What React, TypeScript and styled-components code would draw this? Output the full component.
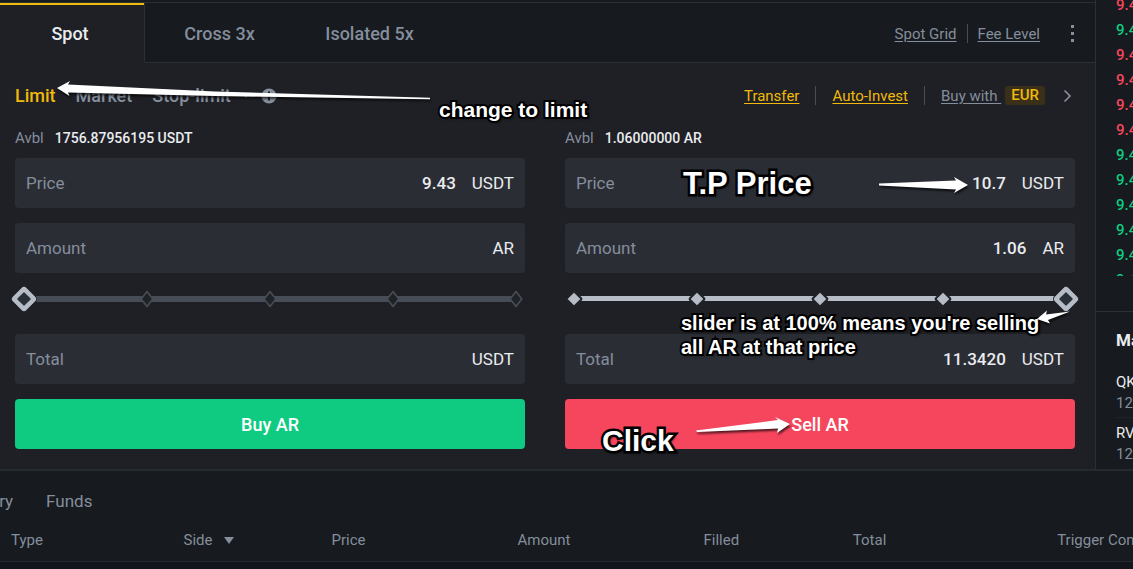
import React from 'react';
import styled, { createGlobalStyle } from 'styled-components';

const GlobalStyle = createGlobalStyle`
  * { box-sizing: border-box; }
  body { margin: 0; background: #12161c; font-family: Roboto, "Liberation Sans", sans-serif; color: #eaecef; overflow: hidden; }
  button, input { font-family: inherit; }
`;

const Top = styled.div`
  display: flex;
  border-bottom: 2px solid #252930;
`;
const Trade = styled.main`
  flex: 1;
  min-width: 0;
  background: #1f2025;
  border-right: 1px solid #2b2f36;
`;
const TabBar = styled.nav`
  display: flex;
  height: 63px;
  padding-top: 2px;
  background: #171a1e;
`;
const ModeTab = styled.button<{ $active?: boolean; $width: number }>`
  width: ${p => p.$width}px;
  padding: 2px 4px 0 0;
  border: 0;
  border-top: 1px solid #2b2f36;
  border-bottom: 1px solid ${p => (p.$active ? '#1f2025' : '#2b2f36')};
  border-right: ${p => (p.$active ? '1px solid #2b2f36' : '0')};
  box-shadow: ${p => (p.$active ? 'inset 0 2px #f0b90b' : 'none')};
  background: ${p => (p.$active ? '#1f2025' : 'transparent')};
  color: ${p => (p.$active ? '#eaecef' : '#848e9c')};
  font-size: 18px;
  font-weight: 500;
`;
const TabLinks = styled.div`
  flex: 1;
  display: flex;
  align-items: center;
  justify-content: flex-end;
  gap: 10px;
  padding: 2px 20px 0 0;
  border-top: 1px solid #2b2f36;
  border-bottom: 1px solid #2b2f36;
`;
const TextLink = styled.a<{ $accent?: boolean }>`
  color: ${p => (p.$accent ? '#f0b90b' : '#848e9c')};
  font-size: 15px;
  line-height: 20px;
  text-decoration: underline;
  text-underline-offset: 2px;
  white-space: pre;
`;
const Divider = styled.span`
  width: 1px;
  height: 19px;
  background: #474d57;
`;
const IconButton = styled.button`
  display: flex;
  padding: 0;
  border: 0;
  background: none;
  color: #848e9c;
`;
const MoreButton = styled(IconButton)`
  margin-left: 20px;
`;
const TypeBar = styled.div`
  display: flex;
  align-items: center;
  justify-content: space-between;
  height: 64px;
  padding: 1px 20px 0 15px;
`;
const TypeGroup = styled.div`
  display: flex;
  align-items: center;
  gap: 20px;
  padding-top: 1px;
`;
const TypeButton = styled.button<{ $active?: boolean }>`
  padding: 0;
  border: 0;
  background: none;
  color: ${p => (p.$active ? '#f0b90b' : '#848e9c')};
  font-size: 18px;
  font-weight: 500;
  line-height: 24px;
`;
const StopGroup = styled.div`
  display: flex;
  align-items: center;
  gap: 10px;
`;
const LinkGroup = styled.div`
  display: flex;
  align-items: center;
  gap: 16px;
`;
const BuyWith = styled.div`
  display: flex;
  align-items: center;
  gap: 4px;
`;
const Currency = styled.span`
  padding: 0 6px;
  border-radius: 3px;
  background: #3a2f18;
  color: #f0b90b;
  font-size: 15px;
  font-weight: 500;
  line-height: 19px;
`;
const Forms = styled.div`
  display: grid;
  grid-template-columns: 1fr 1fr;
  gap: 40px;
  padding: 0 20px 20px 15px;
`;
const Form = styled.form`
  position: relative;
  display: flex;
  flex-direction: column;
  min-width: 0;
`;
const Available = styled.div`
  display: flex;
  gap: 11px;
  height: 31px;
  color: #848e9c;
  font-size: 15px;
  line-height: 22px;
`;
const Balance = styled.strong`
  color: #eaecef;
  font-size: 14px;
  font-weight: 500;
`;
const Field = styled.label`
  display: flex;
  align-items: center;
  height: 50px;
  padding: 0 11px;
  border-radius: 4px;
  background: #2b2d35;
  color: #848e9c;
  font-size: 17px;
  & + & { margin-top: 15px; }
`;
const FieldInput = styled.input`
  flex: 1;
  min-width: 0;
  padding: 0;
  border: 0;
  outline: 0;
  background: none;
  color: #eaecef;
  font-size: 17px;
  font-weight: 500;
  text-align: right;
`;
const Unit = styled.span`
  margin-left: 16px;
  color: #eaecef;
`;
const SliderBox = styled.div`
  position: relative;
  display: flex;
  align-items: center;
  justify-content: space-between;
  height: 61px;
  padding-bottom: 10px;
`;
const Rail = styled.div<{ $full: boolean }>`
  position: absolute;
  top: 23px;
  left: 9px;
  right: 9px;
  height: ${p => (p.$full ? 5 : 6)}px;
  background: ${p => (p.$full ? '#b7bdc6' : '#474d57')};
`;
const Stop = styled.span`
  position: relative;
  display: flex;
  justify-content: center;
  width: 18px;
  & > svg { flex: none; }
`;
const Range = styled.input`
  position: absolute;
  inset: 10px 0 20px;
  width: 100%;
  margin: 0;
  opacity: 0;
`;
const Submit = styled.button<{ $side: 'buy' | 'sell' }>`
  height: 50px;
  margin-top: 15px;
  border: 0;
  border-radius: 4px;
  background: ${p => (p.$side === 'buy' ? '#0ecb81' : '#f6465d')};
  color: #fff;
  font-size: 18px;
  font-weight: 500;
`;
const Note = styled.p<{ $x: number; $y: number; $size: number }>`
  position: absolute;
  left: ${p => p.$x}px;
  top: ${p => p.$y}px;
  z-index: 2;
  margin: 0;
  color: #fff;
  font: bold ${p => p.$size}px/${p => (p.$size > 24 ? 36 : 24)}px "Liberation Sans", sans-serif;
  white-space: pre;
  pointer-events: none;
  paint-order: stroke fill;
  -webkit-text-stroke: ${p => (p.$size > 24 ? 5 : 4)}px #000;
  text-shadow: 2px 2px 3px rgba(0, 0, 0, 0.6);
`;
const Arrows = styled.svg`
  position: absolute;
  left: 0;
  top: 0;
  width: 1px;
  height: 1px;
  overflow: visible;
  z-index: 2;
  pointer-events: none;
  fill: #fff;
  filter: drop-shadow(1px 2px 1px rgba(0, 0, 0, 0.7));
`;
const Side = styled.aside`
  width: 37px;
  overflow: hidden;
  background: #171a1e;
  white-space: nowrap;
`;
const Book = styled.ol`
  height: 276px;
  margin: 0;
  padding: 0 0 0 20px;
  overflow: hidden;
  list-style: none;
`;
const Quote = styled.li<{ $up: boolean }>`
  height: 25px;
  color: ${p => (p.$up ? '#0ecb81' : '#f6465d')};
  font-size: 15px;
  font-weight: 500;
  line-height: 25px;
  &:first-child { height: 18px; line-height: 11px; }
`;
const Market = styled.section`
  margin-top: 35px;
  padding: 16px 0 0 20px;
  border-top: 1px solid #2b2f36;
`;
const MarketTitle = styled.h2`
  margin: 0 0 15px;
  font-size: 17px;
  font-weight: 700;
  line-height: 24px;
`;
const Activity = styled.div`
  height: 50px;
  padding-top: 5px;
  color: #eaecef;
  font-size: 15px;
  line-height: 20px;
  & + & { border-top: 1px solid #1f2328; }
`;
const Time = styled.div`
  color: #848e9c;
  font-size: 15px;
  line-height: 22px;
`;
const Orders = styled.section`
  overflow: hidden;
  background: #171a1e;
  color: #848e9c;
`;
const OrderTabs = styled.nav`
  display: flex;
  gap: 33px;
  height: 60px;
  margin-left: -41px;
`;
const OrderTab = styled.button`
  padding: 0;
  border: 0;
  background: none;
  color: inherit;
  font-size: 17px;
`;
const Table = styled.table`
  width: 108%;
  table-layout: fixed;
  border-collapse: collapse;
  border-bottom: 1px solid #252930;
`;
const Th = styled.th<{ $share: number }>`
  width: ${p => p.$share}%;
  height: 30px;
  padding: 0 0 12px 11px;
  font-size: 15px;
  font-weight: 400;
  line-height: 18px;
  text-align: left;
  white-space: nowrap;
`;
const SortMark = styled.svg`
  margin-left: 12px;
  vertical-align: 1px;
`;

const Diamond = ({ kind }: { kind: 'handle' | 'filled' | 'empty' }) => {
  if (kind === 'handle') {
    return (
      <svg width="32" height="32" viewBox="-16 -16 32 32">
        <rect x="-10" y="-10" width="20" height="20" rx="4" transform="rotate(45)" fill="#b7bdc6" stroke="#1f2328" strokeWidth="1" />
        <rect x="-5" y="-5" width="10" height="10" rx="1" transform="rotate(45)" fill="#2b3139" />
      </svg>
    );
  }
  return (
    <svg width="20" height="20" viewBox="-10 -10 20 20">
      {kind === 'filled' ? (
        <rect x="-5.500" y="-5.500" width="11" height="11" rx="1" transform="rotate(45)" fill="#b7bdc6" stroke="#1f2328" strokeWidth="2" />
      ) : (
        <path d="M0-7.500L5.800 0L0 7.500L-5.800 0Z" fill="#1f2328" stroke="#474d57" strokeWidth="1.600" strokeLinejoin="round" />
      )}
    </svg>
  );
};

const AmountSlider = ({ full }: { full: boolean }) => (
  <SliderBox>
    <Rail $full={full} />
    {[0, 25, 50, 75, 100].map(v => (
      <Stop key={v}>
        <Diamond kind={v === (full ? 100 : 0) ? 'handle' : full ? 'filled' : 'empty'} />
      </Stop>
    ))}
    <Range type="range" min="0" max="100" defaultValue={full ? 100 : 0} aria-label="Percentage of balance" />
  </SliderBox>
);

type FormProps = {
  side: 'buy' | 'sell';
  balance: string;
  price: string;
  amount: string;
  total: string;
  children: React.ReactNode;
};

const OrderForm = ({ side, balance, price, amount, total, children }: FormProps) => (
  <Form onSubmit={e => e.preventDefault()}>
    <Available>
      <span>Avbl</span>
      <Balance>{balance}</Balance>
    </Available>
    <Field>Price<FieldInput defaultValue={price} /><Unit>USDT</Unit></Field>
    <Field>Amount<FieldInput defaultValue={amount} /><Unit>AR</Unit></Field>
    <AmountSlider full={side === 'sell'} />
    <Field>Total<FieldInput defaultValue={total} /><Unit>USDT</Unit></Field>
    <Submit $side={side}>{side === 'buy' ? 'Buy AR' : 'Sell AR'}</Submit>
    {children}
  </Form>
);

const quotes = [false, true, false, false, false, false, true, true, true, true, true, true];
const columns: [string, number][] = [
  ['Type', 14.1],
  ['Side', 12.1],
  ['Price', 15.2],
  ['Amount', 15.2],
  ['Filled', 12.2],
  ['Total', 16.7],
  ['Trigger Conditions', 14.5],
];

export default function App() {
  return (
    <>
      <GlobalStyle />
      <Top>
        <Trade>
          <TabBar>
            <ModeTab $active $width={145}>Spot</ModeTab>
            <ModeTab $width={153}>Cross 3x</ModeTab>
            <ModeTab $width={147}>Isolated 5x</ModeTab>
            <TabLinks>
              <TextLink href="#grid">Spot Grid</TextLink>
              <Divider />
              <TextLink href="#fees">Fee Level</TextLink>
              <MoreButton aria-label="More">
                <svg width="5" height="18" viewBox="0 0 5 18" fill="currentColor">
                  <path d="M1 0h3v3H1zM1 7h3v3H1zM1 14h3v3H1z" />
                </svg>
              </MoreButton>
            </TabLinks>
          </TabBar>
          <TypeBar>
            <TypeGroup>
              <TypeButton $active>Limit</TypeButton>
              <TypeButton>Market</TypeButton>
              <StopGroup>
                <TypeButton>Stop-limit</TypeButton>
                <svg width="10" height="6" viewBox="0 0 10 6" fill="#848e9c"><path d="M1 0h8L5 5z" /></svg>
                <IconButton aria-label="About order types">
                  <svg width="16" height="16" viewBox="0 0 16 16">
                    <circle cx="8" cy="8" r="7.500" fill="#848e9c" />
                    <path d="M7 3.500h2v2H7zM7 7h2v5.500H7z" fill="#1f2025" />
                  </svg>
                </IconButton>
              </StopGroup>
            </TypeGroup>
            <LinkGroup>
              <TextLink $accent href="#transfer">Transfer</TextLink>
              <Divider />
              <TextLink $accent href="#invest">Auto-Invest</TextLink>
              <Divider />
              <BuyWith>
                <TextLink href="#buy">{'Buy with '}</TextLink>
                <Currency>EUR</Currency>
              </BuyWith>
              <IconButton aria-label="Next">
                <svg width="14" height="14" viewBox="0 0 14 14" fill="none" stroke="currentColor" strokeWidth="1.700"><path d="M3.500 1.500L9 7l-5.500 5.500" /></svg>
              </IconButton>
            </LinkGroup>
          </TypeBar>
          <Forms>
            <OrderForm side="buy" balance="1756.87956195 USDT" price="9.43" amount="" total="">
              <Note $x={424} $y={-29} $size={21}>change to limit</Note>
              <Arrows>
                <path d="M42 -39L55 -46L53 -42.500L200 -35.500L415 -29.300V-27.700L200 -31L53 -34.500L54.500 -31Z" />
              </Arrows>
            </OrderForm>
            <OrderForm side="sell" balance="1.06000000 AR" price="10.7" amount="1.06" total="11.3420">
              <Note $x={118} $y={39} $size={31}>T.P Price</Note>
              <Note $x={116} $y={184} $size={20}>{"slider is at 100% means you're selling\nall AR at that price"}</Note>
              <Note $x={37} $y={296} $size={30}>Click</Note>
              <Arrows>
                <path d="M314 56.500L391 53.500L389 50L403 58L389 66L391 62.500L314 58.500Z" />
                <path d="M131 303.500L213 293L210 290L225 297L212 306L213 301.500L132 305Z" />
                <path d="M472 192L482 183.500L481 187.500L505 184.500L483 193L485 196.500Z" />
              </Arrows>
            </OrderForm>
          </Forms>
        </Trade>
        <Side>
          <Book>
            {quotes.map((up, i) => <Quote key={i} $up={up}>9.43</Quote>)}
          </Book>
          <Market>
            <MarketTitle>Market Activities</MarketTitle>
            <Activity>QKC/BTC<Time>12:04:31</Time></Activity>
            <Activity>RVN/BTC<Time>12:04:12</Time></Activity>
          </Market>
        </Side>
      </Top>
      <Orders>
        <OrderTabs>
          <OrderTab>History</OrderTab>
          <OrderTab>Funds</OrderTab>
        </OrderTabs>
        <Table>
          <thead>
            <tr>
              {columns.map(([name, share]) => (
                <Th key={name} $share={share} scope="col">
                  {name}
                  {name === 'Side' && <SortMark width="10" height="7" viewBox="0 0 10 7" fill="#848e9c"><path d="M0 0h10L5 7z" /></SortMark>}
                </Th>
              ))}
            </tr>
          </thead>
        </Table>
      </Orders>
    </>
  );
}
